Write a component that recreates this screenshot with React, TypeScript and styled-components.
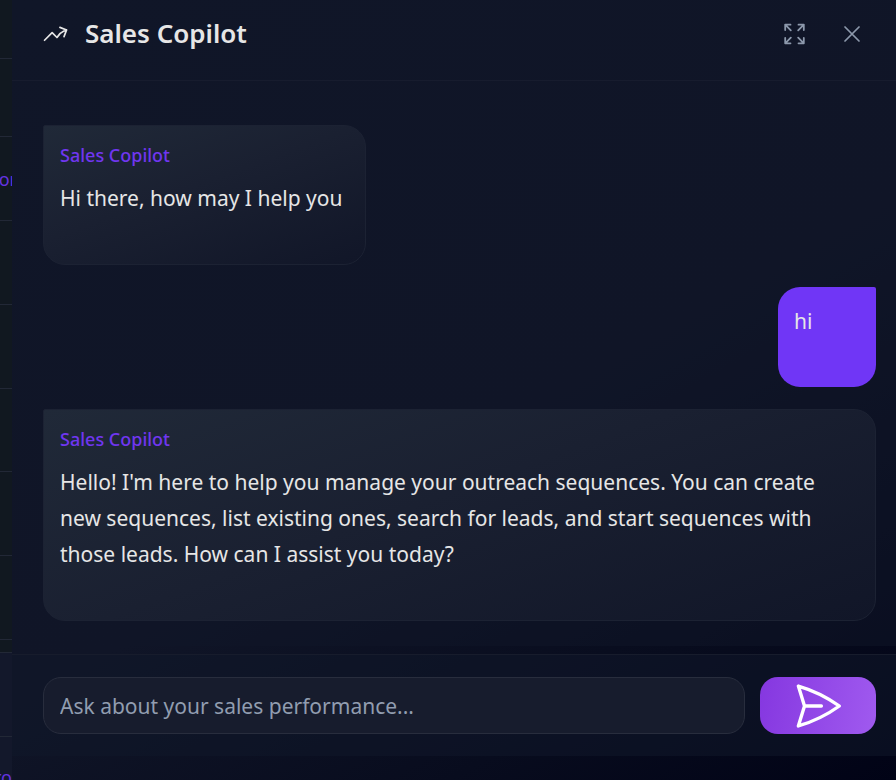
import React from "react";
import styled, { createGlobalStyle } from "styled-components";

const GlobalStyle = createGlobalStyle`
  *, *::before, *::after { box-sizing: border-box; }
  body {
    margin: 0;
    background: #101628;
    color: #e6e6e6;
    font-family: "Noto Sans", sans-serif;
  }
  button, input { font: inherit; }
`;

const Shell = styled.div`
  display: grid;
  grid-template-columns: 12px minmax(0, 1fr);
  height: 100vh;
  overflow: hidden;
`;

const Backdrop = styled.aside`
  display: flex;
  flex-direction: column;
  overflow: hidden;
  background: #111820;
`;

const BackdropRow = styled.div<{ $height: number; $blue?: boolean }>`
  display: flex;
  flex: none;
  align-items: center;
  justify-content: flex-end;
  height: ${(p) => p.$height}px;
  border-bottom: 1px solid #222836;
  background: ${(p) => (p.$blue ? "#13182b" : "transparent")};
  color: #6433e0;
  font-size: 18px;
  line-height: 24px;
`;

const Clipped = styled.span<{ $shift?: boolean }>`
  margin-right: ${(p) => (p.$shift ? "-5px" : "0")};
`;

const Panel = styled.section`
  display: flex;
  flex-direction: column;
  min-height: 0;
  padding-bottom: 24px;
  background: linear-gradient(150deg, #101628 0%, #101527 55%, #080c1e 80%, #010316 100%);
`;

const Header = styled.header`
  display: flex;
  flex: none;
  align-items: center;
  gap: 16px;
  height: 81px;
  padding: 0 28px 13px 30px;
  border-bottom: 1px solid #171c2e;
  background: rgba(16, 22, 40, 0.5);
`;

const Title = styled.h1`
  flex: 1;
  margin: 0 0 2px;
  font-size: 26px;
  font-weight: 600;
  line-height: 36px;
`;

const Actions = styled.div`
  display: flex;
  gap: 26px;
`;

const IconButton = styled.button`
  display: grid;
  place-items: center;
  width: 32px;
  height: 32px;
  padding: 0;
  border: 0;
  background: none;
  color: #8c98ab;
  cursor: pointer;
`;

const Messages = styled.main`
  display: flex;
  flex: 1;
  flex-direction: column;
  gap: 22px;
  min-height: 0;
  margin-bottom: 8px;
  padding: 44px 20px 0 31px;
  overflow: hidden;
  background: rgba(16, 22, 40, 0.5);
`;

const BotBubble = styled.article`
  align-self: flex-start;
  min-width: 323px;
  padding: 16px 16px 48px;
  border: 1px solid #1c2233;
  border-radius: 2px 22px 22px 22px;
  background: linear-gradient(160deg, #202938 0%, #1a2031 45%, #111628 100%);
`;

const UserBubble = styled.article`
  align-self: flex-end;
  min-width: 98px;
  padding: 16px 16px 48px;
  border-radius: 22px 2px 22px 22px;
  background: #7036f6;
`;

const Sender = styled.h2`
  margin: 0 0 12px;
  color: #7036f0;
  font-size: 18px;
  font-weight: 500;
  line-height: 26px;
`;

const Text = styled.p`
  margin: 0;
  font-size: 21px;
  line-height: 36px;
`;

const Composer = styled.form`
  display: flex;
  flex: none;
  gap: 15px;
  padding: 22px 20px 22px 31px;
  border-top: 1px solid #171c2c;
  background: rgba(17, 24, 42, 0.55);
`;

const Prompt = styled.input`
  flex: 1;
  min-width: 0;
  height: 57px;
  padding: 0 16px;
  border: 1px solid #282d3d;
  border-radius: 18px;
  outline: 0;
  background: #171c2d;
  color: #e6e6e6;
  font-size: 21px;

  &::placeholder {
    color: #919db0;
    opacity: 1;
  }
`;

const SendButton = styled.button`
  display: grid;
  place-items: center;
  width: 116px;
  height: 57px;
  padding: 0;
  border: 0;
  border-radius: 18px;
  background: linear-gradient(100deg, #8537e0, #a05aef);
  color: #fff;
  cursor: pointer;
`;

const StrokeIcon = styled.svg`
  flex: none;
  fill: none;
  stroke: currentColor;
  stroke-linecap: round;
  stroke-linejoin: round;
`;

export default function App() {
  return (
    <>
      <GlobalStyle />
      <Shell>
        <Backdrop>
          <BackdropRow $height={59} />
          <BackdropRow $height={78} />
          <BackdropRow $height={84}>
            <Clipped $shift>or</Clipped>
          </BackdropRow>
          <BackdropRow $height={84} />
          <BackdropRow $height={84} />
          <BackdropRow $height={83} />
          <BackdropRow $height={84} />
          <BackdropRow $height={84} />
          <BackdropRow $height={13} />
          <BackdropRow $height={84} $blue />
          <BackdropRow $height={80} $blue>
            <Clipped>ro</Clipped>
          </BackdropRow>
        </Backdrop>
        <Panel>
          <Header>
            <StrokeIcon width="27" height="27" viewBox="0 0 24 24" strokeWidth="1.5" aria-hidden="true">
              <path d="M2.25 18 9 11.25l4.306 4.306a11.95 11.95 0 0 1 5.814-5.518l2.74-1.22m0 0-5.94-2.281m5.94 2.28-2.28 5.941" />
            </StrokeIcon>
            <Title>Sales Copilot</Title>
            <Actions>
              <IconButton type="button" aria-label="Expand">
                <StrokeIcon width="22" height="22" viewBox="0 0 22 22" strokeWidth="1.8" aria-hidden="true">
                  <path d="M2.2 7V1.7h5.3M2.2 1.7l5.6 5.6M15.5 1.7h5.3V7M20.8 1.7l-5.6 5.6M2.2 15v5.3h5.3M2.2 20.3l5.6-5.6M20.8 15v5.3h-5.3M20.8 20.3l-5.6-5.6" />
                </StrokeIcon>
              </IconButton>
              <IconButton type="button" aria-label="Close">
                <StrokeIcon width="28" height="28" viewBox="0 0 24 24" strokeWidth="1.5" aria-hidden="true">
                  <path d="M6 18 18 6M6 6l12 12" />
                </StrokeIcon>
              </IconButton>
            </Actions>
          </Header>
          <Messages>
            <BotBubble>
              <Sender>Sales Copilot</Sender>
              <Text>Hi there, how may I help you</Text>
            </BotBubble>
            <UserBubble>
              <Text>hi</Text>
            </UserBubble>
            <BotBubble>
              <Sender>Sales Copilot</Sender>
              <Text>
                Hello! I'm here to help you manage your outreach sequences. You can create new sequences, list
                existing ones, search for leads, and start sequences with those leads. How can I assist you today?
              </Text>
            </BotBubble>
          </Messages>
          <Composer onSubmit={(e) => e.preventDefault()}>
            <Prompt type="text" aria-label="Message" placeholder="Ask about your sales performance..." />
            <SendButton type="submit" aria-label="Send">
              <StrokeIcon width="54" height="54" viewBox="0 0 24 24" strokeWidth="1.5" aria-hidden="true">
                <path d="M6 12 3.269 3.125A59.769 59.769 0 0 1 21.485 12 59.768 59.768 0 0 1 3.27 20.875L5.999 12Zm0 0h7.5" />
              </StrokeIcon>
            </SendButton>
          </Composer>
        </Panel>
      </Shell>
    </>
  );
}
